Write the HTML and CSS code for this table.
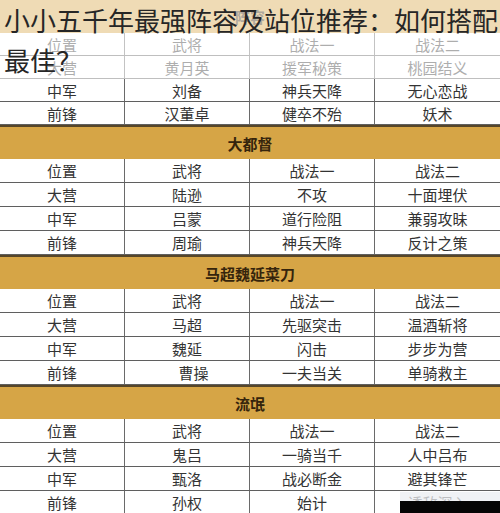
FILE: index.html
```html
<!DOCTYPE html>
<html lang="zh">
<head>
<meta charset="utf-8">
<title>小小五千年最强阵容及站位推荐</title>
<link rel="stylesheet" href="styles.css">
</head>
<body>
<div class="page">
  <div class="board">
    <section class="sec first">
      <div class="band">阵容</div>
      <div class="row"><span>位置</span><span>武将</span><span>战法一</span><span>战法二</span></div>
      <div class="row"><span>大营</span><span>黄月英</span><span>援军秘策</span><span>桃园结义</span></div>
      <div class="row"><span>中军</span><span>刘备</span><span>神兵天降</span><span>无心恋战</span></div>
      <div class="row"><span>前锋</span><span>汉董卓</span><span>健卒不殆</span><span>妖术</span></div>
    </section>
    <section class="sec">
      <div class="band">大都督</div>
      <div class="row"><span>位置</span><span>武将</span><span>战法一</span><span>战法二</span></div>
      <div class="row"><span>大营</span><span>陆逊</span><span>不攻</span><span>十面埋伏</span></div>
      <div class="row"><span>中军</span><span>吕蒙</span><span>道行险阻</span><span>兼弱攻昧</span></div>
      <div class="row"><span>前锋</span><span>周瑜</span><span>神兵天降</span><span>反计之策</span></div>
    </section>
    <section class="sec">
      <div class="band">马超魏延菜刀</div>
      <div class="row"><span>位置</span><span>武将</span><span>战法一</span><span>战法二</span></div>
      <div class="row"><span>大营</span><span>马超</span><span>先驱突击</span><span>温酒斩将</span></div>
      <div class="row"><span>中军</span><span>魏延</span><span>闪击</span><span>步步为营</span></div>
      <div class="row"><span>前锋</span><span class="nudge">曹操</span><span>一夫当关</span><span>单骑救主</span></div>
    </section>
    <section class="sec">
      <div class="band">流氓</div>
      <div class="row"><span>位置</span><span>武将</span><span>战法一</span><span>战法二</span></div>
      <div class="row"><span>大营</span><span>鬼吕</span><span>一骑当千</span><span>人中吕布</span></div>
      <div class="row"><span>中军</span><span>甄洛</span><span>战必断金</span><span>避其锋芒</span></div>
      <div class="row"><span>前锋</span><span>孙权</span><span>始计</span><span>诱敌深入</span></div>
    </section>
  </div>
  <div class="fade"></div>
  <div class="corner-fade"></div>
  <div class="corner-block"></div>
  <h1 class="title">小小五千年最强阵容及站位推荐：如何搭配最佳？</h1>
</div>
</body>
</html>
```

FILE: styles.css
```css
html, body {
  margin: 0;
  padding: 0;
  background: #ffffff;
}

.page {
  position: relative;
  width: 500px;
  height: 513px;
  overflow: hidden;
  font-family: "Noto Sans CJK SC", "Noto Sans", sans-serif;
}

.board {
  display: flex;
  flex-direction: column;
}

.sec {
  display: flex;
  flex-direction: column;
}

.band {
  height: 32px;
  border-top: 2px solid #574629;
  background: #d6a546;
  color: #35240c;
  font-weight: 700;
  font-size: 15px;
  display: flex;
  align-items: center;
  justify-content: center;
}

.first .band {
  height: 33px;
  border-top: none;
}

.row {
  display: grid;
  grid-template-columns: repeat(4, 125px);
  height: 23px;
  border-bottom: 1px solid #5f5f5f;
  color: #333333;
  font-size: 15px;
}

.first .row {
  height: 22px;
}

.row span {
  display: flex;
  align-items: center;
  justify-content: center;
  border-right: 1px solid #6a6a6a;
}

.row span:last-child {
  border-right: none;
}

.row .nudge {
  padding-left: 13px;
}

.fade {
  position: absolute;
  left: 0;
  top: 0;
  width: 500px;
  height: 79px;
  background: rgba(255, 255, 255, 0.6);
}

.corner-fade {
  position: absolute;
  left: 400px;
  top: 492px;
  width: 100px;
  height: 9px;
  background: rgba(235, 238, 242, 0.75);
}

.corner-block {
  position: absolute;
  left: 400px;
  top: 501px;
  width: 100px;
  height: 12px;
  background: #050505;
}

.title {
  position: absolute;
  left: 4px;
  top: 0;
  width: 496px;
  margin: 0;
  font-size: 26px;
  line-height: 40px;
  font-weight: 400;
  color: #262626;
}
```
